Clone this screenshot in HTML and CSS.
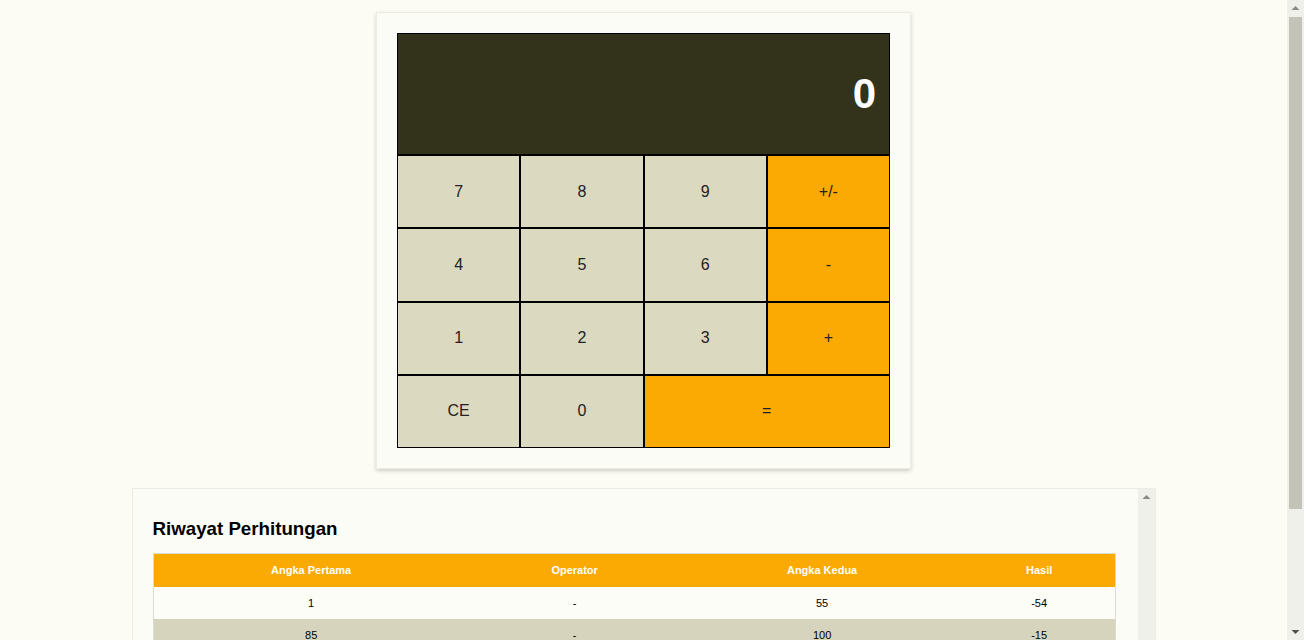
FILE: index.html
```html
<!DOCTYPE html>
<html lang="id">
<head>
<meta charset="utf-8">
<title>Kalkulator</title>
<link rel="stylesheet" href="styles.css">
</head>
<body>
<div class="layout">
  <main class="page">
    <div class="calculator">
      <div class="display">0</div>
      <div class="keys">
        <button class="key">7</button>
        <button class="key">8</button>
        <button class="key">9</button>
        <button class="key op">+/-</button>
        <button class="key">4</button>
        <button class="key">5</button>
        <button class="key">6</button>
        <button class="key op">-</button>
        <button class="key">1</button>
        <button class="key">2</button>
        <button class="key">3</button>
        <button class="key op">+</button>
        <button class="key">CE</button>
        <button class="key">0</button>
        <button class="key op wide">=</button>
      </div>
    </div>
    <section class="history">
      <div class="history-body">
        <h3 class="history-title">Riwayat Perhitungan</h3>
        <table class="history-table">
          <thead>
            <tr>
              <th class="c1">Angka Pertama</th>
              <th class="c2">Operator</th>
              <th class="c3">Angka Kedua</th>
              <th class="c4">Hasil</th>
            </tr>
          </thead>
          <tbody>
            <tr><td>1</td><td>-</td><td>55</td><td>-54</td></tr>
            <tr><td>85</td><td>-</td><td>100</td><td>-15</td></tr>
            <tr><td>12</td><td>+</td><td>8</td><td>20</td></tr>
            <tr><td>7</td><td>+</td><td>3</td><td>10</td></tr>
            <tr><td>50</td><td>-</td><td>25</td><td>25</td></tr>
          </tbody>
        </table>
      </div>
      <div class="sbar sbar-inner">
        <div class="sbar-btn">
          <svg width="17" height="17" viewBox="0 0 17 17"><path d="M4.5 10 L8.5 6 L12.5 10 Z" fill="#8a8a86"/></svg>
        </div>
      </div>
    </section>
  </main>
  <div class="sbar sbar-page">
    <div class="sbar-btn">
      <svg width="17" height="17" viewBox="0 0 17 17"><path d="M4.5 10 L8.5 6 L12.5 10 Z" fill="#8a8a86"/></svg>
    </div>
    <div class="sbar-track">
      <div class="sbar-thumb"></div>
    </div>
    <div class="sbar-btn">
      <svg width="17" height="17" viewBox="0 0 17 17"><path d="M4.5 7 L8.5 11 L12.5 7 Z" fill="#505050"/></svg>
    </div>
  </div>
</div>
</body>
</html>
```
FILE: styles.css
```css
html, body {
  margin: 0;
  padding: 0;
}
body {
  background: #fcfcf4;
  font-family: "Liberation Sans", Arial, sans-serif;
}
.layout {
  display: flex;
  align-items: flex-start;
}
.page {
  flex: 1;
  min-width: 0;
  padding: 12px 0 28px;
}

/* drawn scrollbars */
.sbar {
  width: 17px;
  flex: none;
  background: #f0f0ea;
  display: flex;
  flex-direction: column;
}
.sbar-page {
  height: 640px;
}
.sbar-btn {
  height: 17px;
  flex: none;
}
.sbar-btn svg {
  display: block;
}
.sbar-track {
  flex: 1;
  display: flex;
  flex-direction: column;
}
.sbar-thumb {
  height: 492px;
  margin: 0 2px;
  background: #c4c3b7;
}

.calculator {
  width: 493px;
  margin: 0 auto;
  padding: 20px;
  border: 1px solid #ecece4;
  background: #fcfcf6;
  box-shadow: 0 2px 4px rgba(0, 0, 0, 0.18);
}
.display {
  box-sizing: border-box;
  height: 122px;
  border: 1px solid #000;
  background: #33321b;
  color: #fff;
  font-size: 42px;
  font-weight: bold;
  display: flex;
  align-items: center;
  justify-content: flex-end;
  padding-right: 13px;
}
.keys {
  display: grid;
  grid-template-columns: repeat(4, 1fr);
  grid-auto-rows: 73.25px;
}
.key {
  box-sizing: border-box;
  margin: 0;
  border: 1px solid #000;
  background: #dbd9bf;
  color: #222;
  font-family: "Liberation Sans", Arial, sans-serif;
  font-size: 16px;
  padding: 0;
}
.key.op {
  background: #fba903;
}
.key.wide {
  grid-column: span 2;
}
.history {
  box-sizing: border-box;
  width: 1024px;
  margin: 19px auto 0;
  border: 1px solid #ecece4;
  background: #fcfcf6;
  display: flex;
  align-items: stretch;
}
.history-body {
  flex: 1;
  min-width: 0;
  padding: 20px;
}
.history-title {
  margin: 9px 0 13px;
  font-size: 18.72px;
  line-height: 22px;
  font-weight: bold;
  color: #000;
}
.history-table {
  width: 963px;
  border-collapse: collapse;
  border: 1px solid #dcdcd4;
  font-size: 11px;
}
.history-table th {
  background: #fba903;
  color: #fff;
  font-weight: bold;
  padding: 10px 0;
  line-height: 13px;
}
.history-table td {
  text-align: center;
  color: #000;
  padding: 10px 0;
  line-height: 12px;
  background: #fdfdf8;
}
.history-table tbody tr:nth-child(even) td {
  background: #d6d4bc;
}
.c1 { width: 316px; }
.c2 { width: 212px; }
.c3 { width: 284px; }
.c4 { width: 151px; }
```
